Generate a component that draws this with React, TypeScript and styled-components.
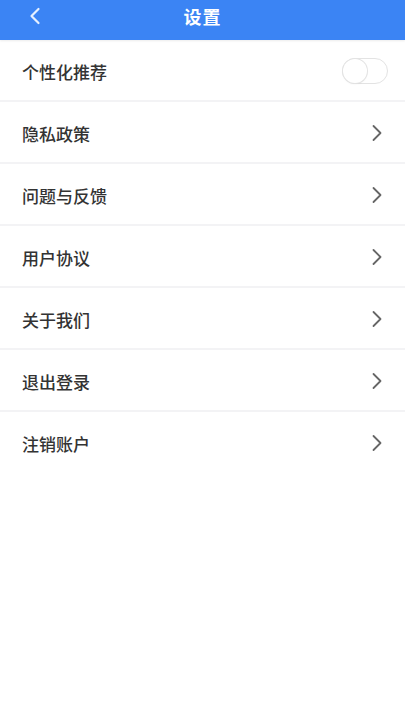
import React, { useState } from 'react';
import styled, { createGlobalStyle } from 'styled-components';

const GlobalStyle = createGlobalStyle`
  html, body {
    margin: 0;
    padding: 0;
    background: #ffffff;
    font-family: "Noto Sans CJK SC", "Noto Sans", sans-serif;
  }
`;

const Page = styled.div`
  width: 100%;
  min-height: 100vh;
  background: #ffffff;
`;

const Header = styled.header`
  height: 40px;
  box-sizing: border-box;
  padding-bottom: 8px;
  background: #3b84f4;
  display: flex;
  align-items: center;
  justify-content: center;
  position: relative;
  box-shadow: 0 1px 2px rgba(0, 0, 0, 0.08);
`;

const BackButton = styled.button`
  position: absolute;
  left: 20px;
  top: 0;
  height: 32px;
  width: 30px;
  padding: 0;
  border: none;
  background: transparent;
  display: flex;
  align-items: center;
  justify-content: center;
  cursor: pointer;
`;

const Title = styled.h1`
  margin: 0;
  font-size: 18px;
  font-weight: 600;
  color: #ffffff;
  letter-spacing: 1px;
`;

const List = styled.ul`
  list-style: none;
  margin: 0;
  padding: 0;
`;

const Row = styled.li<{ $last?: boolean }>`
  display: flex;
  align-items: center;
  justify-content: space-between;
  padding: 2px 22px 0 22px;
  box-sizing: border-box;
  border-bottom: ${(p) => (p.$last ? 'none' : '2px solid #f3f3f5')};
  height: ${(p) => (p.$last ? '60px' : '62px')};
`;

const Label = styled.span`
  font-size: 17px;
  font-weight: 500;
  color: #333333;
`;

const Toggle = styled.button<{ $on: boolean }>`
  width: 46px;
  height: 26px;
  border-radius: 13px;
  border: 1px solid #e3e3e3;
  background: ${(p) => (p.$on ? '#3b84f4' : '#ffffff')};
  position: relative;
  padding: 0;
  margin-right: -5px;
  cursor: pointer;

  &::after {
    content: '';
    position: absolute;
    top: 0;
    left: ${(p) => (p.$on ? '20px' : '0')};
    width: 24px;
    height: 24px;
    border-radius: 50%;
    background: #ffffff;
    box-shadow: 0 0 0 1px #e3e3e3, 0 1px 2px rgba(0, 0, 0, 0.08);
  }
`;

const Chevron = () => (
  <svg width="12" height="18" viewBox="0 0 12 18">
    <path d="M2.5 2 L9.5 9 L2.5 16" fill="none" stroke="#666" strokeWidth="1.8" strokeLinecap="round" strokeLinejoin="round" />
  </svg>
);

const BackIcon = () => (
  <svg width="12" height="18" viewBox="0 0 12 18">
    <path d="M9.5 2 L2.5 9 L9.5 16" fill="none" stroke="#e6f0ff" strokeWidth="2.2" strokeLinecap="round" strokeLinejoin="round" />
  </svg>
);

const items = ['隐私政策', '问题与反馈', '用户协议', '关于我们', '退出登录', '注销账户'];

const App = () => {
  const [personal, setPersonal] = useState(false);

  return (
    <Page>
      <GlobalStyle />
      <Header>
        <BackButton aria-label="返回">
          <BackIcon />
        </BackButton>
        <Title>设置</Title>
      </Header>
      <List>
        <Row>
          <Label>个性化推荐</Label>
          <Toggle $on={personal} onClick={() => setPersonal(!personal)} aria-label="个性化推荐" />
        </Row>
        {items.map((item, i) => (
          <Row key={item} $last={i === items.length - 1}>
            <Label>{item}</Label>
            <Chevron />
          </Row>
        ))}
      </List>
    </Page>
  );
};

export default App;
